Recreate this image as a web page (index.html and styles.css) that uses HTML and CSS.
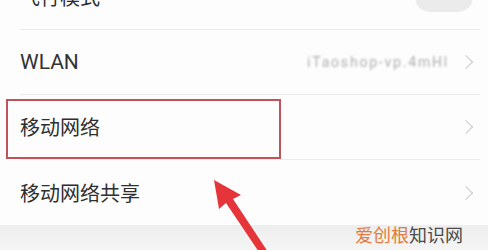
FILE: index.html
```html
<!DOCTYPE html>
<html lang="zh">
<head>
<meta charset="utf-8">
<link rel="stylesheet" href="styles.css">
</head>
<body>
<div class="page">
  <ul class="list">
    <li class="row"><span class="label">飞行模式</span><span class="toggle"></span></li>
    <li class="row"><span class="label latin">WLAN</span><span class="right"><span class="value">iTaoshop-vp.4mHl</span><span class="chev"></span></span></li>
    <li class="row"><span class="label">移动网络</span><span class="chev"></span></li>
    <li class="row last"><span class="label">移动网络共享</span><span class="chev"></span></li>
  </ul>
  <div class="gap"><span class="mark"><span class="orange">爱创根</span>知识网</span></div>
  <div class="highlight"></div>
  <svg class="arrow" width="488" height="250" viewBox="0 0 488 250">
    <polygon points="214,180 241,195 233,199 268,252 259,252 226,203 219,209" fill="#e5343a"/>
  </svg>
</div>
</body>
</html>
```

FILE: styles.css
```css
* { box-sizing: border-box; }
html, body { margin: 0; padding: 0; }
body {
  width: 488px;
  height: 250px;
  overflow: hidden;
  background: #fdfdfd;
  font-family: "Noto Sans CJK SC", "Noto Sans", sans-serif;
  color: #333;
}
.page { position: relative; width: 488px; height: 250px; overflow: hidden; }
.list {
  list-style: none;
  margin: -35px 0 0 0;
  padding: 0;
  background: #fdfdfd;
}
.row {
  height: 65px;
  margin: 0 8px 0 20px;
  border-bottom: 1px solid #ececec;
  display: flex;
  align-items: center;
  justify-content: space-between;
  padding-right: 7px;
}
.row.last { border-bottom: none; }
.label { font-size: 20px; line-height: 1; color: #2e2e2e; }
.latin { font-family: "Roboto", "Noto Sans", sans-serif; font-size: 21px; color: #333; }
.right { display: flex; align-items: center; gap: 12px; }
.value {
  font-family: "Roboto", sans-serif;
  font-size: 14px;
  color: #b0b0b0;
  filter: blur(0.8px);
  letter-spacing: 1.8px;
}
.chev {
  width: 10px;
  height: 10px;
  border-top: 1.5px solid #c9c9c9;
  border-right: 1.5px solid #c9c9c9;
  transform: rotate(45deg);
  margin-right: 2px;
}
.toggle {
  width: 58px;
  height: 30px;
  border-radius: 15px;
  background: #ebebeb;
}
.gap {
  height: 30px;
  background: linear-gradient(#eeeeee, #f6f6f6);
  position: relative;
}
.mark {
  position: absolute;
  left: 355px;
  top: -1px;
  font-size: 18px;
  line-height: 20px;
  color: #4a4a4a;
}
.orange { color: #e27b3e; }
.highlight {
  position: absolute;
  left: 6px;
  top: 99px;
  width: 275px;
  height: 60px;
  border: 2px solid #c0525a;
}
.arrow { position: absolute; left: 0; top: 0; }
```
